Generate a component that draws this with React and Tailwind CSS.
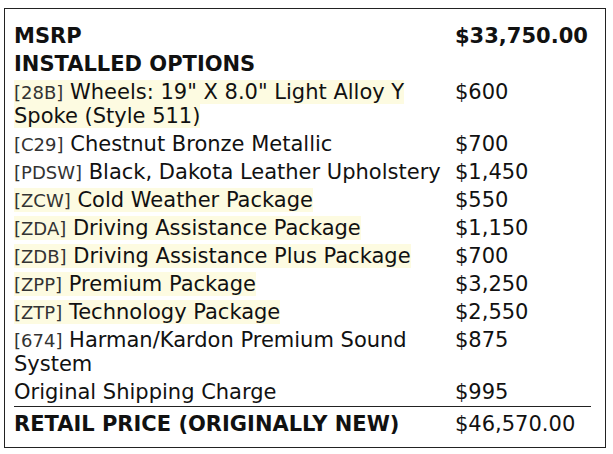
const options = [
  { code: "28B", name: 'Wheels: 19" X 8.0" Light Alloy Y Spoke (Style 511)', price: "$600", hl: true },
  { code: "C29", name: "Chestnut Bronze Metallic", price: "$700" },
  { code: "PDSW", name: "Black, Dakota Leather Upholstery", price: "$1,450" },
  { code: "ZCW", name: "Cold Weather Package", price: "$550", hl: true },
  { code: "ZDA", name: "Driving Assistance Package", price: "$1,150", hl: true },
  { code: "ZDB", name: "Driving Assistance Plus Package", price: "$700", hl: true },
  { code: "ZPP", name: "Premium Package", price: "$3,250", hl: true },
  { code: "ZTP", name: "Technology Package", price: "$2,550", hl: true },
  { code: "674", name: "Harman/Kardon Premium Sound System", price: "$875" },
];

export default function App() {
  return (
    <div className="w-[613px] h-[454px] bg-white pt-[8px] pl-[4px] font-['DejaVu_Sans',sans-serif] text-[#111]">
      <div className="w-[602px] h-[440px] border border-[#222] pt-[13px] pl-[9px]">
        <div className="grid grid-cols-[441px_140px] text-[21px] leading-[24px]">
          <div className="py-[2px] font-bold">MSRP</div>
          <div className="py-[2px] font-bold">$33,750.00</div>
          <div className="py-[2px] font-bold col-span-2">INSTALLED OPTIONS</div>
          {options.map((o) => (
            <Row key={o.code} {...o} />
          ))}
          <div className="py-[2px] pr-[10px]">Original Shipping Charge</div>
          <div className="py-[2px]">$995</div>
          <div className="col-span-2 w-[577px] border-t border-[#222]" />
          <div className="py-[2px] pt-[5px] font-bold">RETAIL PRICE (ORIGINALLY NEW)</div>
          <div className="py-[2px] pt-[5px]">$46,570.00</div>
        </div>
      </div>
    </div>
  );
}

function Row({ code, name, price, hl }) {
  return (
    <>
      <div className="py-[2px] pr-[10px]">
        <span className={hl ? "bg-[#fdfbe1]" : ""}>
          <span className="text-[18px] leading-none text-[#333]">[{code}]</span> {name}
        </span>
      </div>
      <div className="py-[2px]">{price}</div>
    </>
  );
}
